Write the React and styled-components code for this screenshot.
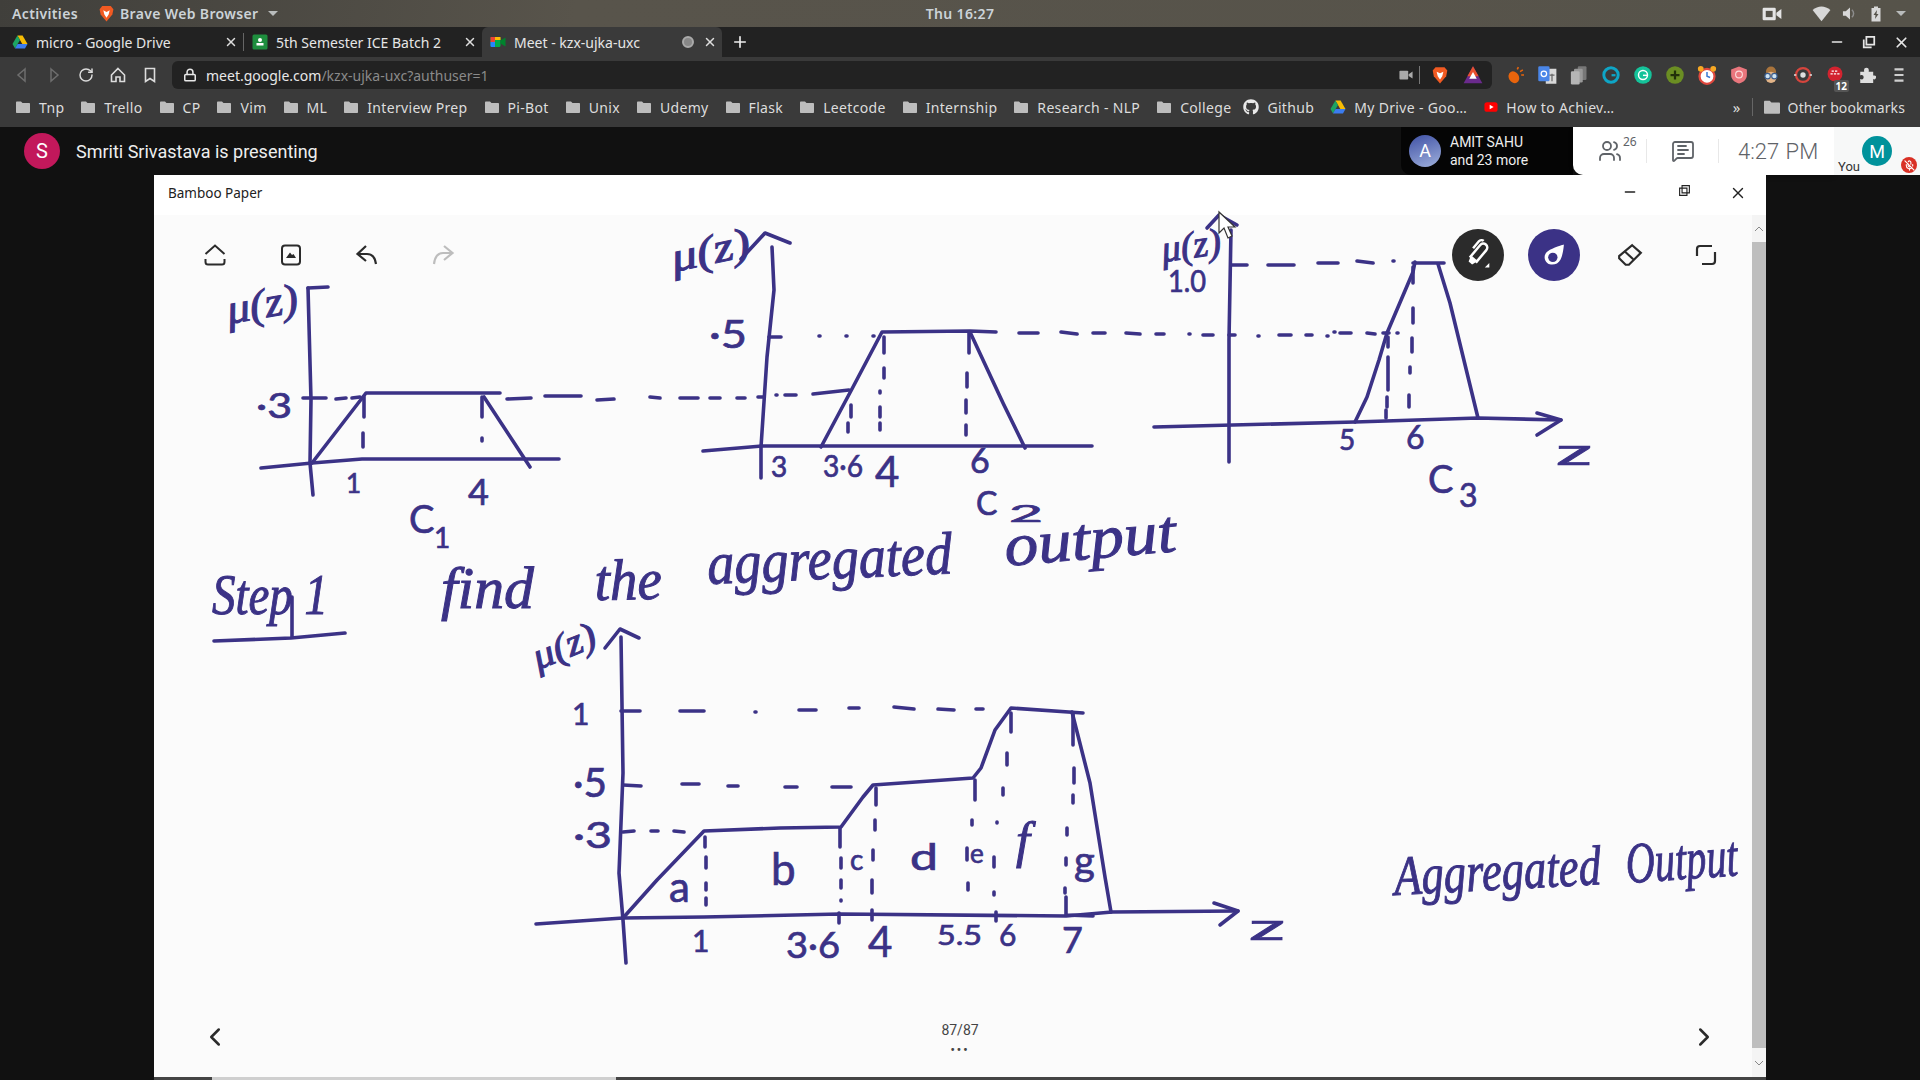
import React from "react";
import styled, { createGlobalStyle } from "styled-components";
import {
  ChevronLeft,
  ChevronRight,
  Lock,
  MessageSquareText,
  MicOff,
  Minus,
  Plus,
  RotateCw,
  Users,
  X,
} from "lucide-react";
import { FaGithub } from "react-icons/fa";

const INK = "#3b3286";

const Global = createGlobalStyle`
  html, body {
    margin: 0;
    padding: 0;
    background: #111;
    overflow: hidden;
  }
  * {
    box-sizing: border-box;
  }
`;

const Page = styled.div`
  width: 1920px;
  height: 1080px;
  display: flex;
  flex-direction: column;
  overflow: hidden;
  font-family: "Noto Sans", sans-serif;
  background: #111;
`;

/* ---------- gnome bar ---------- */

const TopBar = styled.div`
  height: 27px;
  display: grid;
  grid-template-columns: 1fr auto 1fr;
  align-items: center;
  padding: 0 12px;
  background: linear-gradient(100deg, #403f3b, #58544b 30%, #56534a);
  color: #ccd3d8;
  font-size: 14px;
  font-weight: 600;
  letter-spacing: 0.35px;
`;

const TopLeft = styled.div`
  display: flex;
  align-items: center;
`;

const AppName = styled.div`
  display: flex;
  align-items: center;
  margin-left: 20px;
  gap: 5px;
`;

const Caret = styled.span`
  width: 0;
  height: 0;
  margin-left: ${(p) => p.$gap || 5}px;
  border-left: 5px solid transparent;
  border-right: 5px solid transparent;
  border-top: 5px solid #b9bcbc;
`;

const TopRight = styled.div`
  display: flex;
  justify-content: flex-end;
  align-items: center;
  padding-right: 2px;
`;

const TrayItem = styled.span`
  display: flex;
  margin-left: ${(p) => p.$gap || 10}px;
`;

/* ---------- tabs ---------- */

const TabStrip = styled.div`
  height: 30px;
  display: flex;
  align-items: stretch;
  background: #222;
`;

const Tab = styled.div`
  position: relative;
  width: ${(p) => p.$width}px;
  display: flex;
  align-items: center;
  padding-left: ${(p) => p.$pad}px;
  gap: 8px;
  background: ${(p) => (p.$active ? "#3a3a3a" : "transparent")};
  border-radius: ${(p) => (p.$active ? "6px 6px 0 0" : "0")};
  color: #e6e6e6;
  font-size: 14px;
`;

const TabTitle = styled.span`
  flex: 1;
  white-space: nowrap;
`;

const TabClose = styled.span`
  display: flex;
  width: 24px;
  color: #ddd;
  justify-content: center;
`;

const TabDivider = styled.span`
  width: 1px;
  margin: 6px 0;
  background: #666;
`;

const RecordDot = styled.span`
  width: 12px;
  height: 12px;
  margin-right: -4px;
  border-radius: 50%;
  border: 2px solid #aaa;
  background: #888;
`;

const NewTab = styled.span`
  display: flex;
  align-items: center;
  margin-left: 9px;
  color: #eee;
`;

const WindowButtons = styled.div`
  display: flex;
  align-items: center;
  margin-left: auto;
  padding-right: 3px;
  color: #e6e6e6;
`;

const WindowButton = styled.span`
  display: flex;
  width: 32px;
  justify-content: center;
`;

/* ---------- browser toolbar ---------- */

const Toolbar = styled.div`
  height: 32px;
  display: flex;
  align-items: flex-end;
  padding-left: 6px;
  background: #3a3a3a;
`;

const NavButton = styled.span`
  width: 32px;
  height: 28px;
  display: flex;
  align-items: center;
  justify-content: center;
  color: ${(p) => (p.$off ? "#6e6e6e" : "#dcdcdc")};
`;

const Omnibox = styled.div`
  width: 1320px;
  height: 28px;
  margin-left: 6px;
  display: flex;
  align-items: center;
  padding: 0 9px 0 11px;
  border-radius: 6px;
  background: #222;
  font-size: 14px;
  color: #e8e8e8;
`;

const Url = styled.span`
  margin-left: 9px;
  flex: 1;
`;

const UrlRest = styled.span`
  color: #8a8a8a;
`;

const BoxDivider = styled.span`
  width: 1px;
  height: 18px;
  margin: 0 11px 0 6px;
  background: #777;
`;

const BatIcon = styled.span`
  display: flex;
  margin-left: 14px;
`;

const Extensions = styled.div`
  display: flex;
  margin-left: 7px;
`;

const Extension = styled.span`
  position: relative;
  width: 32px;
  height: 28px;
  display: flex;
  align-items: center;
  justify-content: center;
`;

const ExtBadge = styled.span`
  position: absolute;
  right: 2px;
  bottom: -3px;
  padding: 0 2px;
  border-radius: 2px;
  background: #555;
  color: #fff;
  font-size: 10px;
  font-weight: 700;
  line-height: 12px;
`;

/* ---------- bookmarks ---------- */

const BookmarkBar = styled.div`
  height: 38px;
  display: flex;
  align-items: center;
  padding: 0 15px 2px 16px;
  background: #3a3a3a;
  color: #ddd;
  font-size: 14px;
  letter-spacing: 0.33px;
`;

const Bookmark = styled.span`
  display: flex;
  align-items: center;
  gap: 9px;
  margin-right: 17px;
  white-space: nowrap;
`;

const SiteBookmark = styled(Bookmark)`
  gap: 8px;
  margin-left: ${(p) => p.$shift || 0}px;
`;

const Overflow = styled.span`
  margin-left: auto;
  font-size: 15px;
  color: #ddd;
`;

const BookmarkDivider = styled.span`
  width: 1px;
  height: 18px;
  margin: 0 11px;
  background: #666;
`;

const OtherBookmarks = styled(Bookmark)`
  gap: 8px;
  margin-right: 0;
  letter-spacing: 0.1px;
`;

/* ---------- meet bar ---------- */

const MeetBar = styled.div`
  height: 48px;
  display: flex;
  align-items: stretch;
  background: #111;
`;

const Presenter = styled.div`
  flex: 1;
  display: flex;
  align-items: center;
  padding-left: 24px;
  gap: 16px;
  color: #eee;
  font-family: Roboto, sans-serif;
  font-size: 18px;
`;

const Avatar = styled.span`
  width: ${(p) => p.$size}px;
  height: ${(p) => p.$size}px;
  display: flex;
  align-items: center;
  justify-content: center;
  flex: none;
  border-radius: 50%;
  background: ${(p) => p.$bg};
  color: #fff;
  font-family: Roboto, sans-serif;
  font-size: ${(p) => p.$font}px;
`;

const Captions = styled.div`
  width: 172px;
  display: flex;
  align-items: center;
  gap: 9px;
  padding-left: 8px;
  border-bottom-left-radius: 10px;
  background: #050505;
  color: #eee;
  font-family: Roboto, sans-serif;
  font-size: 14px;
  line-height: 18px;
`;

const MeetControls = styled.div`
  width: 261px;
  display: flex;
  align-items: center;
  border-bottom-left-radius: 10px;
  background: #fff;
  color: #5f6368;
  box-shadow: 0 2px 4px rgba(0, 0, 0, 0.3);
`;

const People = styled.span`
  position: relative;
  width: 73px;
  display: flex;
  justify-content: center;
  font-size: 12px;
`;

const PeopleCount = styled.sup`
  position: absolute;
  top: -6px;
  left: 50px;
  font-size: 12px;
`;

const ControlDivider = styled.span`
  width: 1px;
  height: 24px;
  background: #e8e8e8;
`;

const ChatButton = styled.span`
  width: 71px;
  display: flex;
  justify-content: center;
`;

const Clock = styled.span`
  padding-left: 19px;
  font-family: Roboto, sans-serif;
  font-size: 22px;
  font-weight: 300;
  word-spacing: 1px;
`;

const SelfTile = styled.div`
  position: relative;
  width: 86px;
  background: #f7f8f8;
`;

const SelfAvatar = styled.div`
  position: absolute;
  top: 9px;
  left: 28px;
`;

const You = styled.span`
  position: absolute;
  left: 4px;
  bottom: 1px;
  color: #333;
  font-family: Roboto, sans-serif;
  font-size: 13px;
`;

const MicBadge = styled.span`
  position: absolute;
  right: 3px;
  bottom: 2px;
  width: 16px;
  height: 16px;
  display: flex;
  align-items: center;
  justify-content: center;
  border-radius: 50%;
  background: #d93025;
  color: #fff;
`;

/* ---------- shared window ---------- */

const Stage = styled.div`
  flex: 1;
  display: flex;
  padding: 0 154px;
`;

const Win = styled.div`
  width: 1612px;
  display: flex;
  flex-direction: column;
  background: #fbfbfb;
`;

const TitleBar = styled.div`
  height: 40px;
  display: flex;
  align-items: center;
  padding: 0 0 5px 14px;
  background: #fff;
  color: #222;
  font-size: 13.5px;
`;

const TitleButtons = styled.div`
  display: flex;
  margin-left: auto;
  padding-right: 1px;
  color: #222;
`;

const TitleButton = styled.span`
  width: 54px;
  display: flex;
  justify-content: center;
`;

const WinBody = styled.div`
  flex: 1;
  display: flex;
  min-height: 0;
`;

const Canvas = styled.div`
  position: relative;
  flex: 1;
`;

const Sheet = styled.svg`
  display: block;
  width: 100%;
  height: 100%;
  overflow: visible;
`;

const InkLine = styled.path`
  fill: none;
  stroke: ${INK};
  stroke-width: 3.6px;
  stroke-linecap: round;
  stroke-linejoin: round;
`;

const InkText = styled.text`
  fill: ${INK};
  stroke: ${INK};
  stroke-width: ${(p) => (p.$script ? 1 : 0.7)}px;
  font-family: ${(p) => (p.$script ? '"Liberation Serif", serif' : '"Lato", sans-serif')};
  font-style: ${(p) => (p.$script ? "italic" : "normal")};
  font-size: ${(p) => p.$size}px;
`;

const ToolRow = styled.div`
  position: absolute;
  top: 14px;
  left: ${(p) => p.$left}px;
  display: flex;
  gap: 24px;
`;

const Tool = styled.span`
  width: 52px;
  height: 52px;
  display: flex;
  align-items: center;
  justify-content: center;
  border-radius: 50%;
  background: ${(p) => p.$bg || "transparent"};
  color: ${(p) => p.$color || "#2b2b2b"};
`;

const PagerArrow = styled.span`
  position: absolute;
  bottom: 25px;
  ${(p) => (p.$right ? "right: 33px;" : "left: 46px;")}
  display: flex;
  color: #2b2b2b;
`;

const Pager = styled.div`
  position: absolute;
  bottom: 19px;
  left: 806px;
  width: 0;
  display: flex;
  flex-direction: column;
  align-items: center;
  color: #444;
  font-family: Roboto, sans-serif;
  font-size: 14px;
  white-space: nowrap;
`;

const PagerDots = styled.span`
  margin-top: 4px;
  font-size: 12px;
  font-weight: 700;
  line-height: 16px;
  letter-spacing: 2px;
`;

const VScroll = styled.div`
  width: 14px;
  display: flex;
  flex-direction: column;
  align-items: center;
  background: #f4f4f4;
  color: #888;
`;

const ScrollCap = styled.span`
  height: ${(p) => p.$h}px;
  display: flex;
  align-items: center;
`;

const VThumb = styled.div`
  width: 100%;
  flex: 1;
  background: #bebebe;
`;

const HScroll = styled.div`
  height: 3px;
  display: flex;
  background: #444;
`;

const HThumb = styled.div`
  width: 404px;
  margin-left: 58px;
  background: #cfcfcf;
`;

/* ---------- data ---------- */

const bookmarks = [
  "Tnp",
  "Trello",
  "CP",
  "Vim",
  "ML",
  "Interview Prep",
  "Pi-Bot",
  "Unix",
  "Udemy",
  "Flask",
  "Leetcode",
  "Internship",
  "Research - NLP",
  "College",
];

// pen strokes, in page pixels
const strokes = [
  // c1
  "M308 288 L311 400 L310 463 L313 495",
  "M308 288 L328 287",
  "M261 468 L312 463 L362 459 L559 459",
  "M312 463 L366 393 L500 393",
  "M484 397 L530 467",
  // c2
  "M772 247 L774 290 L767 357 L761 447 L761 478",
  "M741 259 L765 233 L790 243",
  "M703 451 L762 446 L1092 446",
  "M821 447 L853 387 L882 332 L970 331 L996 332",
  "M970 332 L1003 403 L1025 448",
  "M813 394 L849 390",
  // c3
  "M1231 230 L1229 340 L1229 462",
  "M1207 228 L1219 215 L1237 225",
  "M1154 427 L1355 422 L1478 418 L1561 420",
  "M1537 413 L1561 420 L1537 435",
  "M1355 422 L1367 397 L1379 360 L1387 333 L1413 272 L1415 262",
  "M1413 263 L1444 263",
  "M1438 264 L1450 303 L1478 418",
  // step
  "M214 641 L291 638 L345 633",
  "M292 597 L292 637",
  // aggregated
  "M621 637 L623 773 L619 873 L623 920 L626 963",
  "M605 648 L620 629 L639 638",
  "M536 924 L623 918 L704 917 L840 914 L1066 916 L1112 912 L1238 911",
  "M1214 903 L1238 911 L1220 925",
  "M623 918 L657 880 L704 831 L780 828 L841 827 L863 797 L873 785 L973 778 L981 768 L995 730 L1011 708 L1083 713",
  "M1072 712 L1090 783 L1105 877 L1111 912",
  "M1066 897 L1066 915 L1093 916",
];

// short dashes: x1, y1, x2, y2
const dashes = [
  // c1
  [303, 398, 326, 398],
  [336, 399, 346, 398],
  [352, 398, 360, 397],
  [507, 399, 531, 398],
  [545, 396, 581, 396],
  [597, 400, 614, 399],
  [650, 397, 660, 398],
  [680, 398, 698, 398],
  [710, 398, 720, 398],
  [737, 398, 745, 398],
  [364, 397, 364, 417],
  [363, 433, 363, 447],
  [482, 397, 482, 417],
  [482, 438, 482, 441],
  // c2
  [769, 337, 781, 337],
  [819, 336, 820, 336],
  [846, 336, 847, 336],
  [873, 336, 874, 336],
  [1019, 333, 1038, 333],
  [1061, 332, 1077, 334],
  [1093, 333, 1105, 333],
  [1126, 333, 1140, 334],
  [1156, 334, 1164, 334],
  [1189, 334, 1190, 334],
  [1203, 335, 1213, 335],
  [758, 397, 764, 397],
  [776, 395, 777, 395],
  [785, 395, 796, 395],
  [851, 405, 851, 417],
  [848, 423, 848, 432],
  [884, 337, 884, 353],
  [884, 368, 884, 378],
  [880, 391, 880, 393],
  [880, 407, 880, 417],
  [880, 423, 880, 430],
  [969, 333, 969, 353],
  [967, 373, 967, 387],
  [966, 400, 966, 413],
  [966, 425, 966, 435],
  // c3
  [1231, 265, 1247, 265],
  [1268, 265, 1294, 265],
  [1318, 263, 1338, 263],
  [1357, 261, 1373, 263],
  [1393, 261, 1394, 261],
  [1229, 335, 1235, 335],
  [1258, 336, 1259, 336],
  [1279, 335, 1291, 335],
  [1306, 335, 1312, 335],
  [1327, 336, 1328, 336],
  [1334, 332, 1335, 332],
  [1340, 333, 1351, 333],
  [1367, 333, 1375, 334],
  [1383, 333, 1389, 333],
  [1397, 333, 1398, 333],
  [1388, 337, 1388, 347],
  [1388, 357, 1388, 390],
  [1387, 397, 1387, 407],
  [1386, 410, 1386, 418],
  [1413, 267, 1413, 283],
  [1413, 308, 1413, 323],
  [1412, 338, 1412, 352],
  [1410, 367, 1410, 373],
  [1409, 395, 1409, 407],
  // aggregated, axis ticks and levels
  [621, 711, 640, 711],
  [680, 711, 704, 711],
  [755, 712, 756, 712],
  [799, 710, 816, 710],
  [849, 708, 859, 708],
  [894, 707, 914, 709],
  [938, 709, 954, 710],
  [976, 709, 983, 709],
  [623, 785, 641, 786],
  [682, 784, 699, 784],
  [728, 786, 738, 786],
  [785, 787, 797, 787],
  [832, 787, 851, 787],
  [623, 832, 634, 831],
  [651, 831, 658, 831],
  [674, 831, 684, 832],
  // aggregated, drop lines
  [705, 837, 705, 847],
  [706, 857, 706, 868],
  [706, 883, 706, 890],
  [706, 898, 706, 905],
  [840, 828, 840, 847],
  [841, 858, 841, 868],
  [841, 880, 841, 888],
  [841, 900, 841, 901],
  [839, 913, 839, 923],
  [876, 788, 876, 805],
  [875, 820, 875, 830],
  [873, 850, 873, 860],
  [872, 880, 872, 893],
  [872, 910, 872, 920],
  [975, 780, 975, 800],
  [972, 820, 972, 825],
  [967, 848, 967, 860],
  [968, 883, 968, 890],
  [1011, 713, 1011, 732],
  [1007, 753, 1007, 765],
  [1003, 788, 1003, 795],
  [997, 822, 997, 823],
  [994, 857, 994, 867],
  [994, 892, 994, 895],
  [996, 912, 996, 921],
  [1073, 713, 1073, 745],
  [1074, 768, 1074, 783],
  [1073, 795, 1073, 803],
  [1067, 828, 1067, 835],
  [1066, 858, 1066, 865],
  [1065, 888, 1065, 893],
];

// handwriting: real text, placed on the sheet
const writing = [
  // c1
  { t: "μ(z)", x: 229, y: 324, s: 42, w: 72, r: -10, script: true },
  { t: "·3", x: 256, y: 418, s: 34, w: 36 },
  { t: "1", x: 346, y: 493, s: 26 },
  { t: "4", x: 468, y: 505, s: 36 },
  { t: "C", x: 409, y: 533, s: 38 },
  { t: "1", x: 434, y: 548, s: 28 },
  // c2
  { t: "μ(z)", x: 674, y: 272, s: 42, w: 80, r: -12, script: true },
  { t: "·5", x: 709, y: 348, s: 38, w: 38 },
  { t: "3", x: 771, y: 477, s: 28 },
  { t: "3·6", x: 823, y: 477, s: 30, w: 40 },
  { t: "4", x: 875, y: 487, s: 42 },
  { t: "6", x: 970, y: 473, s: 34 },
  { t: "C", x: 976, y: 515, s: 32 },
  { t: "2", x: 1009, y: 522, s: 24, w: 34 },
  // c3
  { t: "μ(z)", x: 1163, y: 262, s: 38, w: 60, r: -8, script: true },
  { t: "1.0", x: 1168, y: 292, s: 30, w: 38 },
  { t: "5", x: 1339, y: 450, s: 28 },
  { t: "6", x: 1406, y: 449, s: 32 },
  { t: "z", x: 1556, y: 465, s: 36, w: 36 },
  { t: "C", x: 1428, y: 493, s: 38 },
  { t: "3", x: 1459, y: 507, s: 32 },
  // step line
  { t: "Step 1", x: 212, y: 614, s: 58, w: 116, script: true },
  { t: "find", x: 441, y: 608, s: 60, w: 93, script: true },
  { t: "the", x: 595, y: 600, s: 58, w: 67, r: -1, script: true },
  { t: "aggregated", x: 708, y: 584, s: 60, w: 245, r: -2.5, script: true },
  { t: "output", x: 1006, y: 566, s: 60, w: 172, r: -5, script: true },
  // aggregated plot
  { t: "μ(z)", x: 538, y: 670, s: 38, w: 66, r: -22, script: true },
  { t: "1", x: 572, y: 725, s: 30 },
  { t: "·5", x: 573, y: 797, s: 40, w: 34 },
  { t: "·3", x: 573, y: 848, s: 36, w: 39 },
  { t: "a", x: 669, y: 902, s: 42 },
  { t: "b", x: 771, y: 885, s: 44 },
  { t: "1", x: 692, y: 952, s: 30 },
  { t: "3·6", x: 786, y: 958, s: 36, w: 54 },
  { t: "4", x: 868, y: 957, s: 42 },
  { t: "5.5", x: 937, y: 945, s: 26, w: 45 },
  { t: "6", x: 999, y: 946, s: 30 },
  { t: "7", x: 1062, y: 953, s: 36 },
  { t: "z", x: 1249, y: 940, s: 36, w: 36 },
  { t: "c", x: 850, y: 870, s: 28 },
  { t: "d", x: 910, y: 870, s: 36, w: 28 },
  { t: "e", x: 970, y: 863, s: 26 },
  { t: "f", x: 1016, y: 857, s: 50, script: true },
  { t: "g", x: 1074, y: 875, s: 40 },
  // side note
  { t: "Aggregated", x: 1395, y: 895, s: 56, w: 207, r: -3, script: true },
  { t: "Output", x: 1627, y: 883, s: 58, w: 112, r: -4, script: true },
];

/* ---------- icons ---------- */

const Glyph = ({ size = 16, children }) => (
  <svg width={size} height={size} viewBox="0 0 16 16">
    {children}
  </svg>
);

const FolderIcon = ({ size = 14 }) => (
  <svg width={size} height={size} viewBox="0 0 14 14">
    <path d="M0 2.5 C0 2 .4 1.5 1 1.5 H5 L6.5 3 H13 C13.6 3 14 3.4 14 4 V12 C14 12.6 13.6 13 13 13 H1 C.4 13 0 12.6 0 12 Z" fill="#bdbdbd" />
  </svg>
);

const DriveIcon = () => (
  <Glyph>
    <path d="M5.4 1.5 H10.6 L15.5 10 H10.3 Z" fill="#f6bc04" />
    <path d="M5.4 1.5 L0.5 10 L3 14.5 L8 6 Z" fill="#1da462" />
    <path d="M3 14.5 H13 L15.5 10 H5.6 Z" fill="#3b7cf0" />
  </Glyph>
);

const BraveIcon = ({ size = 16 }) => (
  <Glyph size={size}>
    <path d="M4 1 H12 L14.5 4 L13.5 9 L8 15.5 L2.5 9 L1.5 4 Z" fill="#f15a22" />
    <path d="M5 5 L8 6.5 L11 5 L10 9 L8 12 L6 9 Z" fill="#fff" />
  </Glyph>
);

const Classroom = () => (
  <Glyph>
    <rect x="0.5" y="0.5" width="15" height="15" rx="1.5" fill="#1e8e3e" />
    <circle cx="8" cy="6" r="2" fill="#fff" />
    <rect x="4.5" y="9" width="7" height="2.5" fill="#fff" />
  </Glyph>
);

const MeetIcon = () => (
  <Glyph>
    <rect x="0.5" y="3" width="10" height="10" rx="1.5" fill="#00ac47" />
    <path d="M0.5 3 H5 V8 H0.5 Z" fill="#ea4335" />
    <path d="M5 3 H10.5 V6 H5 Z" fill="#fbbc04" />
    <path d="M0.5 8 H5 V13 H2 C1 13 .5 12.5 .5 12 Z" fill="#2684fc" />
    <path d="M10.5 6.5 L15.5 3.5 V12.5 L10.5 9.5 Z" fill="#00832d" />
  </Glyph>
);

const YoutubeIcon = () => (
  <Glyph size={14}>
    <rect x="0.5" y="2.5" width="15" height="11" rx="3" fill="#f00" />
    <path d="M6.5 5.5 L11 8 L6.5 10.5 Z" fill="#fff" />
  </Glyph>
);

const extensionIcons = [
  <Glyph size={18} key="a">
    <ellipse cx="7" cy="10" rx="4.5" ry="5.5" transform="rotate(-30 7 10)" fill="#e8640c" />
    <path d="M10 3 L11 1 M12.5 5 L15 3.5 M13.5 8 L16 8" stroke="#e8640c" strokeWidth="1.4" />
  </Glyph>,
  <Glyph size={20} key="b">
    <rect x="7" y="3" width="8.5" height="12" fill="#d8d8d8" />
    <rect x="1" y="1" width="9" height="12" rx="1" fill="#4a86e8" />
    <circle cx="5.5" cy="7" r="2.2" fill="none" stroke="#fff" strokeWidth="1" />
    <path d="M10 8 H14 M12 7 V13" stroke="#666" strokeWidth="1" />
  </Glyph>,
  <Glyph size={20} key="c">
    <rect x="7" y="1" width="7" height="11" rx="1" fill="#777" />
    <rect x="4" y="3" width="7" height="11" rx="1" fill="#999" />
    <rect x="1.5" y="5" width="7" height="10.5" rx="1" fill="#b5b5b5" />
  </Glyph>,
  <Glyph size={18} key="d">
    <circle cx="8" cy="8" r="6.4" fill="none" stroke="#0ea5c6" strokeWidth="2.6" />
    <path d="M8.5 8.2 H12" stroke="#0ea5c6" strokeWidth="2" />
  </Glyph>,
  <Glyph size={18} key="e">
    <circle cx="8" cy="8" r="7.8" fill="#15c39a" />
    <circle cx="8" cy="8" r="4" fill="none" stroke="#fff" strokeWidth="1.3" />
    <path d="M8 8.3 H12" stroke="#fff" strokeWidth="1.3" />
  </Glyph>,
  <Glyph size={18} key="f">
    <circle cx="8" cy="8" r="7.8" fill="#6b8e23" />
    <path d="M8 4 V12 M4 8 H12" stroke="#22300a" strokeWidth="2" />
  </Glyph>,
  <Glyph size={20} key="g">
    <circle cx="8" cy="9" r="6" fill="#fff" stroke="#e0483e" strokeWidth="1.8" />
    <path d="M8 5.5 V9 L10.5 10" stroke="#3a7bd5" strokeWidth="1.2" fill="none" />
    <circle cx="3" cy="3" r="2.3" fill="#f7a823" />
    <circle cx="13" cy="3" r="2.3" fill="#f7a823" />
  </Glyph>,
  <Glyph size={18} key="h">
    <path d="M8 0.5 L15 3 V8 C15 12 12 14.5 8 15.5 C4 14.5 1 12 1 8 V3 Z" fill="#e9767d" />
    <circle cx="8" cy="7.5" r="3" fill="none" stroke="#fbdcdc" strokeWidth="1" />
  </Glyph>,
  <Glyph size={18} key="i">
    <circle cx="8" cy="5" r="4.5" fill="#a9743c" />
    <circle cx="8" cy="10" r="5" fill="#e3b488" />
    <circle cx="5" cy="9" r="2.4" fill="#cfe3f2" stroke="#3a5e90" strokeWidth="1" />
    <circle cx="11" cy="9" r="2.4" fill="#cfe3f2" stroke="#3a5e90" strokeWidth="1" />
  </Glyph>,
  <Glyph size={18} key="j">
    <circle cx="8" cy="8" r="6.2" fill="#3a3a3a" stroke="#d6453d" strokeWidth="2" />
    <circle cx="8" cy="8" r="2.4" fill="#ddd" />
    <path d="M14 8 H16 M0 8 H2" stroke="#ddd" strokeWidth="1.2" />
  </Glyph>,
  <Glyph size={18} key="k">
    <circle cx="8" cy="7" r="6.6" fill="#d3232f" />
    <path d="M4 7 H12 M5 4.5 H11" stroke="#fff" strokeWidth="1.2" strokeDasharray="2 1" />
  </Glyph>,
  <Glyph size={18} key="l">
    <path d="M2 5 H5.5 C5 2.5 6 1.5 7.5 1.5 C9 1.5 10 2.5 9.5 5 H13.5 V8.5 C16 8 16.5 9.5 16 10.5 C15.5 12 14.5 12.3 13.5 11.5 V15 H2 V11.5 C4 12.5 5 11.5 5 10 C5 8.5 3.5 7.5 2 8.5 Z" fill="#dedede" />
  </Glyph>,
  <Glyph size={18} key="m">
    <path d="M4 3 H12 M4 8 H12 M4 13 H12" stroke="#cfcfcf" strokeWidth="1.8" />
  </Glyph>,
];

/* ---------- parts ---------- */

const GnomeBar = () => (
  <TopBar>
    <TopLeft>
      <span>Activities</span>
      <AppName>
        <BraveIcon size={17} />
        Brave Web Browser
        <Caret />
      </AppName>
    </TopLeft>
    <span>Thu 16:27</span>
    <TopRight>
      <TrayItem>
        <Glyph size={20}>
          <rect x="0.5" y="3" width="10.5" height="10" rx="1" fill="#e4e4e4" />
          <rect x="3" y="5.5" width="5.5" height="5" fill="#55524a" />
          <path d="M11.5 7 L15.5 4 V12 L11.5 9 Z" fill="#e4e4e4" />
        </Glyph>
      </TrayItem>
      <TrayItem $gap={30}>
        <Glyph size={19}>
          <path d="M0.5 5 C5 1 11 1 15.5 5 L8 14.5 Z" fill="#d8d8d8" />
        </Glyph>
      </TrayItem>
      <TrayItem $gap={11}>
        <Glyph size={15}>
          <path d="M1 5.5 H4 L8.5 1.5 V14.5 L4 10.5 H1 Z" fill="#d8d8d8" />
          <path d="M10.5 4 C13 6 13 10 10.5 12" stroke="#8c8c8c" strokeWidth="1.6" fill="none" />
        </Glyph>
      </TrayItem>
      <TrayItem $gap={11}>
        <Glyph size={16}>
          <path d="M6 0.5 H10 V2 H12.5 V15.5 H3.5 V2 H6 Z" fill="#d8d8d8" />
          <path d="M9 4 L5.5 9 H7.5 L7 13 L10.5 8 H8.5 Z" fill="#55524a" />
        </Glyph>
      </TrayItem>
      <Caret $gap={12} />
    </TopRight>
  </TopBar>
);

const Tabs = () => (
  <TabStrip>
    <Tab $width={243} $pad={12}>
      <DriveIcon />
      <TabTitle>micro - Google Drive</TabTitle>
      <TabClose>
        <X size={14} strokeWidth={2.5} />
      </TabClose>
    </Tab>
    <TabDivider />
    <Tab $width={238} $pad={8}>
      <Classroom />
      <TabTitle>5th Semester ICE Batch 2</TabTitle>
      <TabClose>
        <X size={14} strokeWidth={2.5} />
      </TabClose>
    </Tab>
    <Tab $width={240} $pad={8} $active>
      <MeetIcon />
      <TabTitle>Meet - kzx-ujka-uxc</TabTitle>
      <RecordDot />
      <TabClose>
        <X size={14} strokeWidth={2.5} />
      </TabClose>
    </Tab>
    <NewTab>
      <Plus size={18} strokeWidth={2.2} />
    </NewTab>
    <WindowButtons>
      <WindowButton>
        <Minus size={16} />
      </WindowButton>
      <WindowButton>
        <Glyph size={14}>
          <path d="M5 2 H14 V11 H5 Z M2 5 V14 H11" fill="none" stroke="#e6e6e6" strokeWidth="2" />
        </Glyph>
      </WindowButton>
      <WindowButton>
        <X size={17} strokeWidth={2.4} />
      </WindowButton>
    </WindowButtons>
  </TabStrip>
);

const BrowserToolbar = () => (
  <Toolbar>
    <NavButton $off>
      <Glyph size={16}>
        <path d="M11 2 L4 8 L11 14 Z" fill="none" stroke="#6e6e6e" strokeWidth="1.5" />
      </Glyph>
    </NavButton>
    <NavButton $off>
      <Glyph size={16}>
        <path d="M5 2 L12 8 L5 14 Z" fill="none" stroke="#6e6e6e" strokeWidth="1.5" />
      </Glyph>
    </NavButton>
    <NavButton>
      <RotateCw size={16} strokeWidth={2.2} />
    </NavButton>
    <NavButton>
      <Glyph size={16}>
        <path d="M8 1.5 L14.5 8 V14.5 H10 V10 H6 V14.5 H1.5 V8 Z" fill="none" stroke="#dcdcdc" strokeWidth="1.6" />
      </Glyph>
    </NavButton>
    <NavButton>
      <Glyph size={16}>
        <path d="M3.5 1.5 H12.5 V14.5 L8 11.5 L3.5 14.5 Z" fill="none" stroke="#dcdcdc" strokeWidth="1.6" />
      </Glyph>
    </NavButton>
    <Omnibox>
      <Lock size={14} strokeWidth={2.6} />
      <Url>
        meet.google.com<UrlRest>/kzx-ujka-uxc?authuser=1</UrlRest>
      </Url>
      <Glyph size={14}>
        <rect x="0.5" y="3" width="10" height="10" rx="1" fill="#aaa" />
        <path d="M11 7 L15.5 4 V12 L11 9 Z" fill="#aaa" />
      </Glyph>
      <BoxDivider />
      <BraveIcon size={18} />
      <BatIcon>
        <Glyph size={20}>
          <path d="M8 1 L15.5 14.5 H0.5 Z" fill="#6a2a8c" />
          <path d="M8 1 L12.5 9 H3.5 Z" fill="#e8502f" />
          <path d="M8 5.5 L11 11 H5 Z" fill="#fff" />
        </Glyph>
      </BatIcon>
    </Omnibox>
    <Extensions>
      {extensionIcons.map((icon, i) => (
        <Extension key={i}>
          {icon}
          {i === 10 && <ExtBadge>12</ExtBadge>}
        </Extension>
      ))}
    </Extensions>
  </Toolbar>
);

const Bookmarks = () => (
  <BookmarkBar>
    {bookmarks.map((name) => (
      <Bookmark key={name}>
        <FolderIcon />
        {name}
      </Bookmark>
    ))}
    <SiteBookmark $shift={-5}>
      <FaGithub size={16} color="#e8e8e8" />
      Github
    </SiteBookmark>
    <SiteBookmark $shift={-1}>
      <DriveIcon />
      My Drive - Goo…
    </SiteBookmark>
    <SiteBookmark>
      <YoutubeIcon />
      How to Achiev…
    </SiteBookmark>
    <Overflow>»</Overflow>
    <BookmarkDivider />
    <OtherBookmarks>
      <FolderIcon size={16} />
      Other bookmarks
    </OtherBookmarks>
  </BookmarkBar>
);

const PresenterBar = () => (
  <MeetBar>
    <Presenter>
      <Avatar $size={36} $bg="#c2185b" $font={20}>
        S
      </Avatar>
      Smriti Srivastava is presenting
    </Presenter>
    <Captions>
      <Avatar $size={32} $bg="linear-gradient(160deg, #3f51a5, #9fb0dc)" $font={18}>
        A
      </Avatar>
      <div>
        AMIT SAHU
        <br />
        and 23 more
      </div>
    </Captions>
    <MeetControls>
      <People>
        <Users size={24} strokeWidth={1.8} />
        <PeopleCount>26</PeopleCount>
      </People>
      <ControlDivider />
      <ChatButton>
        <MessageSquareText size={24} strokeWidth={1.8} />
      </ChatButton>
      <ControlDivider />
      <Clock>4:27 PM</Clock>
    </MeetControls>
    <SelfTile>
      <SelfAvatar>
        <Avatar $size={30} $bg="#00929b" $font={18}>
          M
        </Avatar>
      </SelfAvatar>
      <You>You</You>
      <MicBadge>
        <MicOff size={11} strokeWidth={2.4} />
      </MicBadge>
    </SelfTile>
  </MeetBar>
);

const Drawing = () => (
  <Sheet viewBox="154 215 1598 862" preserveAspectRatio="xMinYMin meet">
    {strokes.map((d, i) => (
      <InkLine key={i} d={d} />
    ))}
    {dashes.map(([x1, y1, x2, y2], i) => (
      <InkLine key={i} d={`M${x1} ${y1} L${x2} ${y2}`} />
    ))}
    {writing.map((l, i) => (
      <InkText
        key={i}
        x={l.x}
        y={l.y}
        $size={l.s}
        $script={l.script}
        textLength={l.w}
        lengthAdjust={l.w ? "spacingAndGlyphs" : undefined}
        transform={l.r ? `rotate(${l.r} ${l.x} ${l.y})` : undefined}
      >
        {l.t}
      </InkText>
    ))}
    {/* mouse pointer */}
    <path d="M1219 212 L1219 233 L1224 228 L1228 238 L1232 236 L1228 227 L1235 227 Z" fill="#fff" stroke="#333" strokeWidth="1.2" />
  </Sheet>
);

const PaperWindow = () => (
  <Win>
    <TitleBar>
      Bamboo Paper
      <TitleButtons>
        <TitleButton>
          <Minus size={16} />
        </TitleButton>
        <TitleButton>
          <Glyph size={13}>
            <path d="M5 2 H14 V11 H5 Z M2 5 V14 H11 V5 Z" fill="none" stroke="#222" strokeWidth="1.4" />
          </Glyph>
        </TitleButton>
        <TitleButton>
          <X size={18} strokeWidth={1.8} />
        </TitleButton>
      </TitleButtons>
    </TitleBar>
    <WinBody>
      <Canvas>
        <Drawing />
        <ToolRow $left={35}>
          <Tool>
            <svg width="24" height="24" viewBox="0 0 24 24" fill="none" stroke="currentColor" strokeWidth="2">
              <path d="M2.5 11 L12 2.5 L21.5 11 M2.5 16 V19 C2.5 20.5 3.5 21.5 5 21.5 H19 C20.5 21.5 21.5 20.5 21.5 19 V16" />
            </svg>
          </Tool>
          <Tool>
            <svg width="24" height="24" viewBox="0 0 24 24" fill="none" stroke="currentColor" strokeWidth="2">
              <rect x="3" y="2.5" width="18" height="19" rx="3" />
              <path d="M7 15 L11 9.5 L13 12 L14.5 11 L17 15 Z" fill="currentColor" stroke="none" />
            </svg>
          </Tool>
          <Tool>
            <svg width="24" height="24" viewBox="0 0 24 24" fill="none" stroke="currentColor" strokeWidth="2.2">
              <path d="M11 3 L2.5 11 L11 18 M2.5 11 H12 C17 11 20 14 21 21" />
            </svg>
          </Tool>
          <Tool $color="#bdbdbd">
            <svg width="24" height="24" viewBox="0 0 24 24" fill="none" stroke="currentColor" strokeWidth="2.2">
              <path d="M13 3 L21.5 10 L13 17 M21.5 10 H12 C7 10 4 13 3 21" />
            </svg>
          </Tool>
        </ToolRow>
        <ToolRow $left={1298}>
          <Tool $bg="#2b2b2b" $color="#fff">
            <svg width="34" height="34" viewBox="0 0 30 30" fill="none" stroke="currentColor" strokeWidth="2.2">
              <g transform="rotate(40 15 14)">
                <path d="M11.5 20 V7 C11.5 2 18.5 2 18.5 7 V20 Z" />
                <path d="M11.5 20 H18.5 L17 24.5 H13 Z" fill="currentColor" stroke="none" />
                <path d="M8.5 13 V5 C8.5 3.5 10 2 11.5 2" />
              </g>
              <path d="M21 26 L25 26 L25 22 Z" fill="currentColor" stroke="none" />
            </svg>
          </Tool>
          <Tool $bg={INK} $color="#fff">
            <svg width="28" height="28" viewBox="0 0 24 24">
              <path d="M20.5 3 C20.5 3 20 11.5 17.5 16 C15.5 20 10 21.5 6.5 19 C3 16.5 3 11 7 8.5 C10.5 6 20.5 3 20.5 3 Z" fill="#fff" />
              <circle cx="11" cy="14" r="4" fill={INK} />
            </svg>
          </Tool>
          <Tool>
            <svg width="26" height="26" viewBox="0 0 24 24" fill="none" stroke="currentColor" strokeWidth="2">
              <path d="M14 3 L22 10 L11 21 L8 21 L2 15 L2 13 Z" />
              <path d="M7 8.5 L15 16" />
            </svg>
          </Tool>
          <Tool>
            <svg width="24" height="24" viewBox="0 0 24 24" fill="none" stroke="currentColor" strokeWidth="2.2">
              <path d="M3 13 V6 C3 4 4 3 6 3 H18 M21 9 V18 C21 20 20 21 18 21 H8" />
            </svg>
          </Tool>
        </ToolRow>
        <PagerArrow>
          <ChevronLeft size={30} strokeWidth={2} />
        </PagerArrow>
        <Pager>
          87/87
          <PagerDots>•••</PagerDots>
        </Pager>
        <PagerArrow $right>
          <ChevronRight size={30} strokeWidth={2} />
        </PagerArrow>
      </Canvas>
      <VScroll>
        <ScrollCap $h={27}>
          <svg width="10" height="6" viewBox="0 0 10 6">
            <path d="M1 5 L5 1 L9 5" fill="none" stroke="#888" />
          </svg>
        </ScrollCap>
        <VThumb />
        <ScrollCap $h={29}>
          <svg width="10" height="6" viewBox="0 0 10 6">
            <path d="M1 1 L5 5 L9 1" fill="none" stroke="#888" />
          </svg>
        </ScrollCap>
      </VScroll>
    </WinBody>
    <HScroll>
      <HThumb />
    </HScroll>
  </Win>
);

const App = () => (
  <Page>
    <Global />
    <GnomeBar />
    <Tabs />
    <BrowserToolbar />
    <Bookmarks />
    <PresenterBar />
    <Stage>
      <PaperWindow />
    </Stage>
  </Page>
);

export default App;
